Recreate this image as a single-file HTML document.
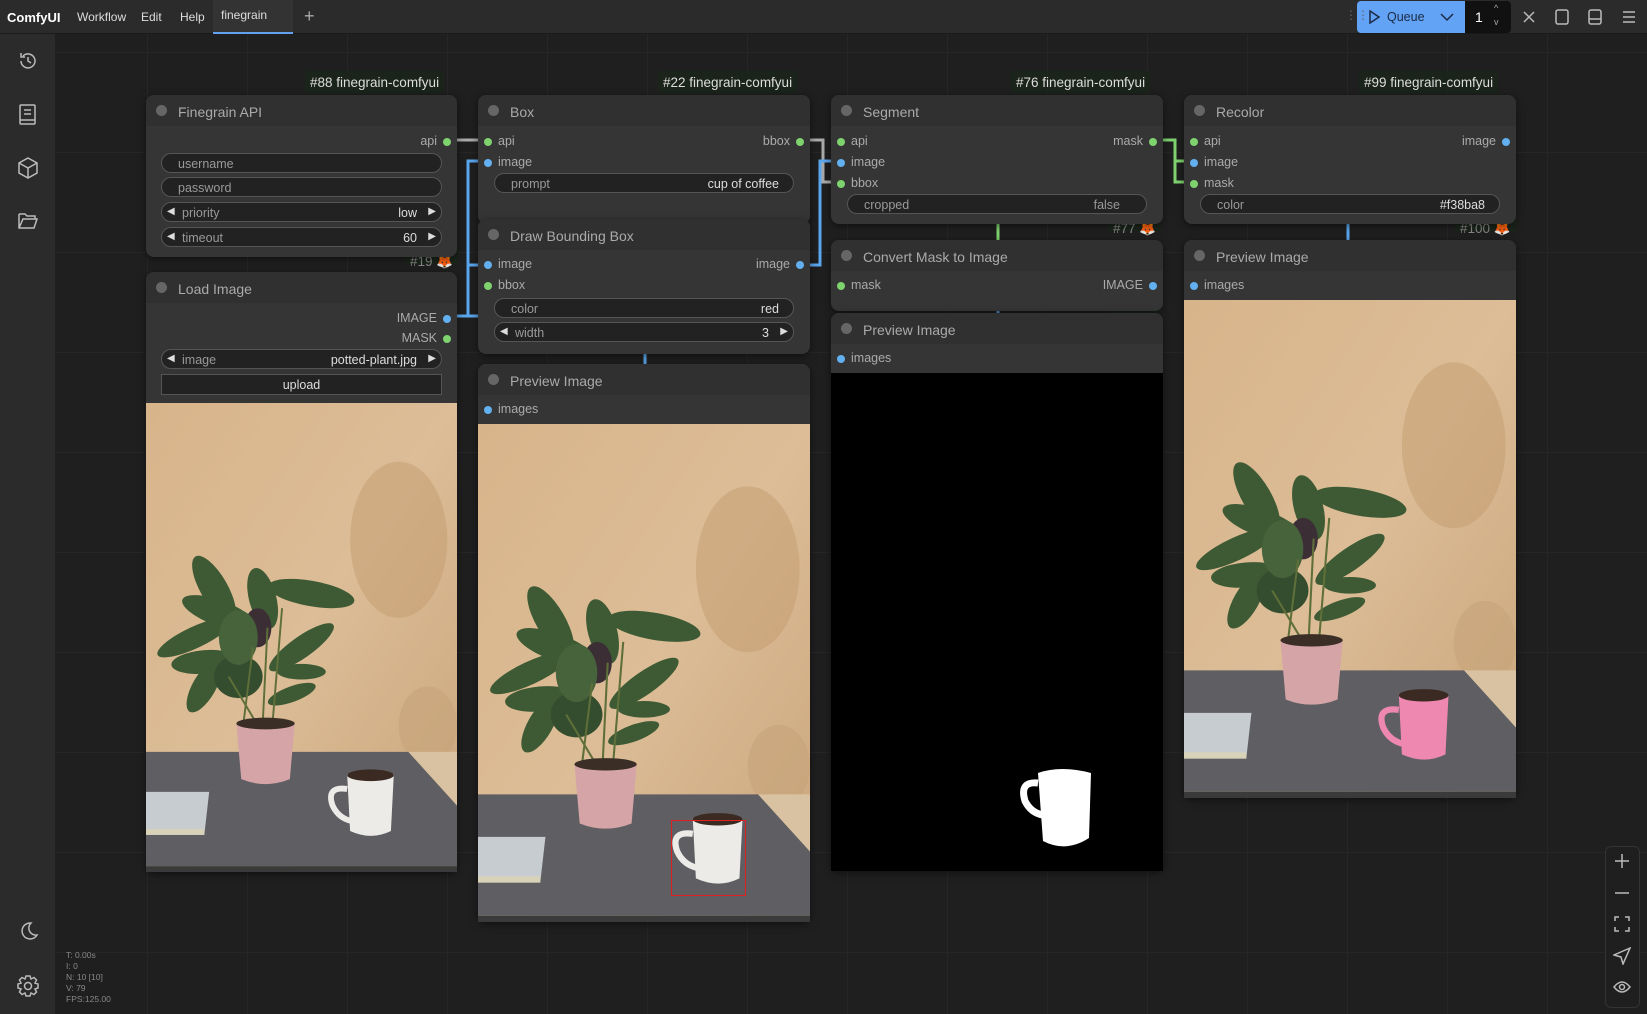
<!DOCTYPE html>
<html><head><meta charset="utf-8">
<style>
*{box-sizing:border-box;margin:0;padding:0}
body{width:1647px;height:1014px;overflow:hidden;background:#202020;font-family:"Liberation Sans",sans-serif;color:#ddd;position:relative}
.canvas{position:absolute;left:55px;top:34px;right:0;bottom:0;background-color:#1f1f1f;background-image:linear-gradient(#262626 1px,transparent 1px),linear-gradient(90deg,#262626 1px,transparent 1px);background-size:100px 100px;background-position:-8px 18px}
.top{position:absolute;left:0;top:0;width:1647px;height:34px;background:#2b2b2b;border-bottom:1px solid #1a1a1a}
.top span{position:absolute;top:10px;font-size:12px;color:#ddd}
.side{position:absolute;left:0;top:34px;width:55px;bottom:0;background:#2b2b2b}
.node{position:absolute;background:#353535;border-radius:8px;box-shadow:0 2px 8px rgba(0,0,0,.5)}
.hd{height:31px;background:#303030;border-radius:8px 8px 0 0;position:relative;font-size:14px;color:#aaa;padding:9px 0 0 32px}
.hd:before{content:"";position:absolute;left:10px;top:10px;width:11px;height:11px;border-radius:50%;background:#666}
.row{position:absolute;font-size:12.5px;color:#aaa}
.dot{position:absolute;width:8px;height:8px;border-radius:50%}
.g{background:#7ed36f}.b{background:#63b0f0}
.w{position:absolute;height:20px;border:1px solid #555;border-radius:10px;background:#222;font-size:12.5px;color:#999;padding:3px 0 0 16px}
.w .v{position:absolute;right:14px;top:3px;color:#ddd}
.w.a{padding-left:20px}
.w.a:before{content:"◀";position:absolute;left:5px;top:3px;font-size:10px;color:#ddd}
.w.a:after{content:"▶";position:absolute;right:5px;top:3px;font-size:10px;color:#ddd}
.w.a .v{right:24px}
.badge{position:absolute;background:#1a241a;color:#ddd;font-size:13.5px;padding:4px 5px;height:22px}
.img{position:absolute;display:block}
.stat{position:absolute;left:66px;top:950px;font-size:8.5px;line-height:11px;color:#888}
.ic{position:absolute;stroke:#bbb;fill:none;stroke-width:1.5}
</style></head><body>
<svg width="0" height="0" style="position:absolute">
<symbol id="photo" viewBox="0 0 320 480" preserveAspectRatio="none">
<defs><linearGradient id="wall" x1="0" y1="0" x2="1" y2="1"><stop offset="0" stop-color="#d8b48a"/><stop offset=".5" stop-color="#dcbd97"/><stop offset="1" stop-color="#c9a47a"/></linearGradient></defs>
<rect width="320" height="480" fill="url(#wall)"/>
<ellipse cx="260" cy="140" rx="50" ry="80" fill="#c49c70" opacity=".5"/>
<ellipse cx="290" cy="330" rx="30" ry="40" fill="#c7a37a" opacity=".6"/>
<polygon points="0,357 270,357 320,412 320,474 0,474" fill="#5f5f63"/>
<polygon points="270,357 320,357 320,412" fill="#d8c2a2"/>
<rect x="0" y="474" width="320" height="6" fill="#3a3a3a"/>
<polygon points="0,398 65,398 60,442 0,442" fill="#c6ccd0"/>
<rect x="0" y="436" width="60" height="6" fill="#d8d2b8"/>
<g fill="#3d5a34">
<ellipse cx="70" cy="190" rx="14" ry="38" transform="rotate(-30 70 190)"/>
<ellipse cx="170" cy="195" rx="45" ry="13" transform="rotate(10 170 195)"/>
<ellipse cx="50" cy="240" rx="42" ry="11" transform="rotate(-25 50 240)"/>
<ellipse cx="75" cy="215" rx="40" ry="13" transform="rotate(20 75 215)"/>
<ellipse cx="120" cy="200" rx="14" ry="32" transform="rotate(-15 120 200)"/>
<ellipse cx="60" cy="265" rx="34" ry="12" transform="rotate(-5 60 265)"/>
<ellipse cx="60" cy="290" rx="12" ry="30" transform="rotate(30 60 290)"/>
<ellipse cx="115" cy="230" rx="14" ry="20" fill="#3b2f35"/>
<ellipse cx="160" cy="250" rx="40" ry="11" transform="rotate(-35 160 250)"/>
<ellipse cx="160" cy="275" rx="25" ry="8"/>
<ellipse cx="150" cy="298" rx="26" ry="8" transform="rotate(-20 150 298)"/>
<ellipse cx="95" cy="280" rx="25" ry="22" fill="#344d2e"/>
<ellipse cx="95" cy="240" rx="20" ry="28" fill="#46633b"/>
</g>
<path d="M100 330 L110 250 M120 330 L125 230 M130 330 L140 210 M115 330 L85 280" stroke="#5f6f3a" stroke-width="2"/>
<path d="M93 328 Q123 318 153 328 L148 385 Q123 395 98 385 Z" fill="#d5a4a6"/>
<ellipse cx="123" cy="328" rx="30" ry="6" fill="#3a2e26"/>
<g fill="currentColor">
<path d="M207 380 L255 380 L252 438 Q232 448 210 438 Z"/>
<path d="M207 395 Q185 392 192 412 Q198 425 212 428" stroke="currentColor" stroke-width="6" fill="none"/>
</g>
<ellipse cx="231" cy="381" rx="24" ry="6" fill="#3a2a22"/>
</symbol>
</svg>

<div class="top">
<span style="left:7px;font-weight:bold;font-size:13px;color:#fff">ComfyUI</span>
<span style="left:77px">Workflow</span>
<span style="left:141px">Edit</span>
<span style="left:180px">Help</span>
<div style="position:absolute;left:213px;top:0;width:80px;height:34px;background:#333;border-bottom:2px solid #63a0f0"></div>
<span style="left:221px;top:8px">finegrain</span>
<span style="left:304px;top:6px;font-size:18px;color:#aaa">+</span>
<div style="position:absolute;left:1357px;top:1px;width:108px;height:32px;background:#63a3f5;border-radius:4px 0 0 4px"></div>
<svg style="position:absolute;left:1368px;top:10px" width="12" height="14"><path d="M2 1 L11 7 L2 13 Z" stroke="#1b2a44" fill="none" stroke-width="1.5"/></svg>
<span style="left:1387px;color:#1b2a44;font-size:12.5px">Queue</span>
<svg style="position:absolute;left:1440px;top:12px" width="14" height="10"><path d="M1 2 L7 8 L13 2" stroke="#1b2a44" fill="none" stroke-width="1.5"/></svg>
<div style="position:absolute;left:1465px;top:1px;width:46px;height:32px;background:#111;border-radius:0 4px 4px 0"></div>
<span style="left:1475px;top:9px;color:#fff;font-size:14px">1</span>
<span style="left:1494px;top:3px;font-size:9px;color:#aaa">^</span>
<span style="left:1494px;top:17px;font-size:9px;color:#aaa">v</span>
<span style="left:1345px;top:8px;color:#666;font-size:12px">⋮⋮</span>
<svg class="ic" style="left:1522px;top:10px" width="14" height="14"><path d="M2 2L12 12M12 2L2 12"/></svg>
<svg class="ic" style="left:1555px;top:9px" width="14" height="16"><rect x="1" y="1" width="12" height="14" rx="2"/></svg>
<svg class="ic" style="left:1588px;top:9px" width="14" height="16"><rect x="1" y="1" width="12" height="14" rx="2"/><path d="M1 10H13"/></svg>
<svg class="ic" style="left:1622px;top:10px" width="14" height="14"><path d="M1 2H13M1 7H13M1 12H13"/></svg>
</div>
<div class="side">
<svg class="ic" style="left:17px;top:16px" width="22" height="22"><path d="M4 11a7 7 0 1 0 2-5M4 3v4h4M11 7v4l3 2"/></svg>
<svg class="ic" style="left:18px;top:70px" width="20" height="22"><rect x="2" y="1" width="15" height="19" rx="1"/><path d="M6 6h7M6 10h7M2 16h15"/></svg>
<svg class="ic" style="left:17px;top:123px" width="22" height="22"><path d="M11 1L20 6V16L11 21L2 16V6Z M2 6L11 11L20 6 M11 11V21"/></svg>
<svg class="ic" style="left:17px;top:177px" width="22" height="20"><path d="M2 3h6l2 2h8v3 M2 3v14h15l3-9H6l-4 9"/></svg>
<svg class="ic" style="left:17px;top:887px" width="22" height="22"><path d="M14 2a8 8 0 1 0 6 12a7 7 0 0 1-6-12z"/></svg>
<svg class="ic" style="left:16px;top:940px" width="24" height="24"><circle cx="12" cy="12" r="3.5"/><path d="M10 2h4l1 3 3-1.5 2.5 2.5-1.5 3 3 1v4l-3 1 1.5 3-2.5 2.5-3-1.5-1 3h-4l-1-3-3 1.5-2.5-2.5 1.5-3-3-1v-4l3-1-1.5-3 2.5-2.5 3 1.5z"/></svg>
</div>
<div class="canvas"></div>

<svg style="position:absolute;left:0;top:0" width="1647" height="1014">
<g fill="none" stroke-width="3">
<path d="M448 140 H478" stroke="#aaa"/>
<path d="M455 316 H468 V161 H486 M468 265 H486 M468 230 V316" stroke="#5aa6ee"/>
<path d="M810 140 H823 V182 H840" stroke="#aaa"/>
<path d="M468 316 H478" stroke="#5aa6ee"/>
<path d="M810 265 H820 V161 H840" stroke="#5aa6ee"/>
<path d="M1160 140 H1175 V182 H1192 M1175 161 H1192" stroke="#7ed36f"/>
<path d="M998 224 V240" stroke="#7ed36f"/>
<path d="M998 300 V313" stroke="#5aa6ee"/>
<path d="M645 354 V364" stroke="#5aa6ee"/>
<path d="M1348 224 V240" stroke="#5aa6ee"/>
<path d="M645 205 V219" stroke="#5aa6ee"/>
</g>
</svg>

<div class="badge" style="left:305px;top:71px">#88 finegrain-comfyui</div>
<div class="badge" style="left:658px;top:71px">#22 finegrain-comfyui</div>
<div class="badge" style="left:1011px;top:71px">#76 finegrain-comfyui</div>
<div class="badge" style="left:1359px;top:71px">#99 finegrain-comfyui</div>
<div class="badge" style="left:660px;top:194px;height:16px;color:#888">#98 finegrain-comfyui</div>
<div class="badge" style="left:1110px;top:291px;padding:2px 4px">#78 🦊</div>
<div class="badge" style="left:1108px;top:217px;height:14px;color:#888">#77 🦊</div>
<div class="badge" style="left:1455px;top:217px;height:14px;color:#888">#100 🦊</div>
<div class="badge" style="left:405px;top:250px;height:14px;color:#888">#19 🦊</div>

<div class="node" style="left:146px;top:95px;width:311px;height:162px">
<div class="hd">Finegrain API</div>
<div class="row" style="right:20px;top:39px">api</div><div class="dot g" style="right:6px;top:43px"></div>
<div class="w" style="left:15px;top:58px;width:281px">username</div>
<div class="w" style="left:15px;top:82px;width:281px">password</div>
<div class="w a" style="left:15px;top:107px;width:281px">priority<span class="v">low</span></div>
<div class="w a" style="left:15px;top:132px;width:281px">timeout<span class="v">60</span></div>
</div>
<div class="node" style="left:146px;top:272px;width:311px;height:600px">
<div class="hd">Load Image</div>
<div class="row" style="right:20px;top:39px">IMAGE</div><div class="dot b" style="right:6px;top:43px"></div>
<div class="row" style="right:20px;top:59px">MASK</div><div class="dot g" style="right:6px;top:63px"></div>
<div class="w a" style="left:15px;top:77px;width:281px">image<span class="v">potted-plant.jpg</span></div>
<div style="position:absolute;left:15px;top:102px;width:281px;height:21px;border:1px solid #555;background:#222;font-size:12.5px;text-align:center;padding-top:3px;color:#ddd">upload</div>
<svg class="img" style="left:0;top:131px" width="311" height="469" color="#ecebe8"><use href="#photo"/></svg>
</div>
<div class="node" style="left:478px;top:95px;width:332px;height:129px">
<div class="hd">Box</div>
<div class="dot g" style="left:6px;top:43px"></div><div class="row" style="left:20px;top:39px">api</div>
<div class="row" style="right:20px;top:39px">bbox</div><div class="dot g" style="right:6px;top:43px"></div>
<div class="dot b" style="left:6px;top:64px"></div><div class="row" style="left:20px;top:60px">image</div>
<div class="w" style="left:16px;top:78px;width:300px">prompt<span class="v">cup of coffee</span></div>
</div>
<div class="node" style="left:478px;top:219px;width:332px;height:135px">
<div class="hd">Draw Bounding Box</div>
<div class="dot b" style="left:6px;top:42px"></div><div class="row" style="left:20px;top:38px">image</div>
<div class="row" style="right:20px;top:38px">image</div><div class="dot b" style="right:6px;top:42px"></div>
<div class="dot g" style="left:6px;top:63px"></div><div class="row" style="left:20px;top:59px">bbox</div>
<div class="w" style="left:16px;top:79px;width:300px">color<span class="v">red</span></div>
<div class="w a" style="left:16px;top:103px;width:300px">width<span class="v">3</span></div>
</div>
<div class="node" style="left:478px;top:364px;width:332px;height:558px">
<div class="hd">Preview Image</div>
<div class="dot b" style="left:6px;top:42px"></div><div class="row" style="left:20px;top:38px">images</div>
<svg class="img" style="left:0;top:60px" width="332" height="498" color="#ecebe8"><use href="#photo"/></svg>
<div style="position:absolute;left:193px;top:456px;width:75px;height:76px;border:1.5px solid #e02020"></div>
</div>
<div class="node" style="left:831px;top:95px;width:332px;height:129px">
<div class="hd">Segment</div>
<div class="dot g" style="left:6px;top:43px"></div><div class="row" style="left:20px;top:39px">api</div>
<div class="row" style="right:20px;top:39px">mask</div><div class="dot g" style="right:6px;top:43px"></div>
<div class="dot b" style="left:6px;top:64px"></div><div class="row" style="left:20px;top:60px">image</div>
<div class="dot g" style="left:6px;top:85px"></div><div class="row" style="left:20px;top:81px">bbox</div>
<div class="w" style="left:16px;top:99px;width:300px">cropped<span class="v" style="right:26px;color:#999">false</span></div>
</div>
<div class="node" style="left:831px;top:240px;width:332px;height:71px">
<div class="hd">Convert Mask to Image</div>
<div class="dot g" style="left:6px;top:42px"></div><div class="row" style="left:20px;top:38px">mask</div>
<div class="row" style="right:20px;top:38px">IMAGE</div><div class="dot b" style="right:6px;top:42px"></div>
</div>
<div class="node" style="left:831px;top:313px;width:332px;height:558px">
<div class="hd">Preview Image</div>
<div class="dot b" style="left:6px;top:42px"></div><div class="row" style="left:20px;top:38px">images</div>
<svg class="img" style="left:0;top:60px" width="332" height="498" viewBox="0 0 332 498"><rect width="332" height="498" fill="#000"/>
<path d="M207 400 Q230 392 260 400 L258 465 Q235 480 212 468 Z" fill="#fff"/>
<path d="M207 410 Q188 408 194 428 Q200 440 212 442" stroke="#fff" stroke-width="7" fill="none"/></svg>
</div>
<div class="node" style="left:1184px;top:95px;width:332px;height:129px">
<div class="hd">Recolor</div>
<div class="dot g" style="left:6px;top:43px"></div><div class="row" style="left:20px;top:39px">api</div>
<div class="row" style="right:20px;top:39px">image</div><div class="dot b" style="right:6px;top:43px"></div>
<div class="dot b" style="left:6px;top:64px"></div><div class="row" style="left:20px;top:60px">image</div>
<div class="dot g" style="left:6px;top:85px"></div><div class="row" style="left:20px;top:81px">mask</div>
<div class="w" style="left:16px;top:99px;width:300px">color<span class="v">#f38ba8</span></div>
</div>
<div class="node" style="left:1184px;top:240px;width:332px;height:558px">
<div class="hd">Preview Image</div>
<div class="dot b" style="left:6px;top:42px"></div><div class="row" style="left:20px;top:38px">images</div>
<svg class="img" style="left:0;top:60px" width="332" height="498" color="#ef88b0"><use href="#photo"/></svg>
</div>

<div class="stat">T: 0.00s<br>I: 0<br>N: 10 [10]<br>V: 79<br>FPS:125.00</div>

<div style="position:absolute;left:1605px;top:846px;width:35px;height:162px;border:1px solid #333;border-radius:6px;background:#1f1f1f"></div>
<svg class="ic" style="left:1614px;top:853px" width="16" height="16"><path d="M8 1V15M1 8H15"/></svg>
<svg class="ic" style="left:1614px;top:885px" width="16" height="16"><path d="M1 8H15"/></svg>
<svg class="ic" style="left:1614px;top:916px" width="16" height="16"><path d="M1 5V1H5M11 1H15V5M15 11V15H11M5 15H1V11"/></svg>
<svg class="ic" style="left:1613px;top:947px" width="18" height="18"><path d="M17 1L1 8L8 10L10 17Z"/></svg>
<svg class="ic" style="left:1613px;top:980px" width="18" height="14"><path d="M1 7Q9 -3 17 7Q9 17 1 7Z"/><circle cx="9" cy="7" r="2.5"/></svg>
</body></html>
